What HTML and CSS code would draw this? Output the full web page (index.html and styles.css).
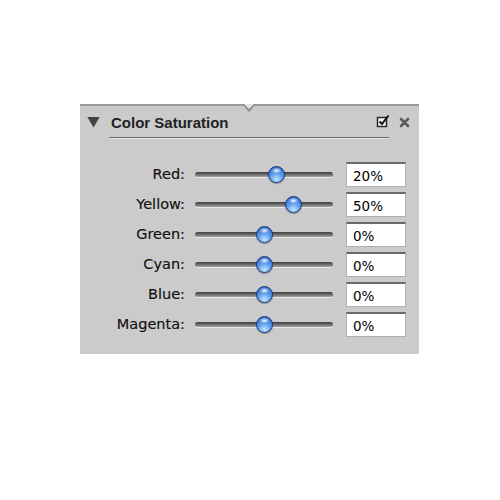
FILE: index.html
```html
<!DOCTYPE html>
<html lang="en">
<head>
  <meta charset="UTF-8">
  <title>Color Saturation</title>
  <link rel="stylesheet" href="styles.css">
</head>
<body>
  <div class="panel">
    <div class="panel-head">
      <span class="disclosure"></span>
      <span class="title">Color Saturation</span>
      <svg class="enable" width="14" height="14" viewBox="0 0 14 14">
        <rect x="1.5" y="3.5" width="9" height="9" fill="#f4f4f4" stroke="#222" stroke-width="1.4"/>
        <path d="M3.5 7.5 L6 10 L12.5 1.5" fill="none" stroke="#111" stroke-width="2"/>
      </svg>
      <svg class="close" width="11" height="11" viewBox="0 0 11 11">
        <path d="M2 2 L9 9 M9 2 L2 9" stroke="#5a5a5a" stroke-width="2.6" stroke-linecap="round"/>
      </svg>
    </div>
    <div class="rule"></div>

    <div class="rows">
      <label class="name">Red:</label>
      <div class="track"><span class="knob" style="--v:0.6"></span></div>
      <div class="field">20%</div>

      <label class="name">Yellow:</label>
      <div class="track"><span class="knob" style="--v:0.74"></span></div>
      <div class="field">50%</div>

      <label class="name">Green:</label>
      <div class="track"><span class="knob" style="--v:0.5"></span></div>
      <div class="field">0%</div>

      <label class="name">Cyan:</label>
      <div class="track"><span class="knob" style="--v:0.5"></span></div>
      <div class="field">0%</div>

      <label class="name">Blue:</label>
      <div class="track"><span class="knob" style="--v:0.5"></span></div>
      <div class="field">0%</div>

      <label class="name">Magenta:</label>
      <div class="track"><span class="knob" style="--v:0.5"></span></div>
      <div class="field">0%</div>
    </div>
  </div>
</body>
</html>
```

FILE: styles.css
```css
html,body{
  margin : 0;
  background : #fff;
}

.panel{
  position : relative;
  box-sizing : border-box;
  width : 339px;
  height : 250px;
  margin : 104px 0 0 80px;
  padding : 5px 0 15px;
  background : #cbcbcb;
  border-top : 2px solid #9a9a9a;
  font-family : "DejaVu Sans", sans-serif;
  color : #111;
}

/* little notch hanging from the top edge */
.panel::before,
.panel::after{
  content : "";
  position : absolute;
  clip-path : polygon(0 0, 100% 0, 50% 100%);
}
.panel::before{
  left : 162px;
  top : -2px;
  width : 14px;
  height : 8px;
  background : #8c8c8c;
}
.panel::after{
  left : 164px;
  top : -2px;
  width : 10px;
  height : 5px;
  background : #e2e2e2;
}

/* header */
.panel-head{
  display : flex;
  align-items : center;
  height : 22px;
  padding : 0 9px 0 7px;
}
.disclosure{
  width : 13px;
  height : 11px;
  background : #444;
  clip-path : polygon(0 0, 100% 0, 50% 100%);
}
.title{
  flex : 1;
  margin-left : 11px;
  font-family : "Liberation Sans", Arial, sans-serif;
  font-weight : bold;
  font-size : 15px;
  color : #222;
}
.enable{
  margin-top : -2px;
}
.close{
  margin-left : 9px;
}

.rule{
  height : 1px;
  margin : 4px 30px 20px 29px;
  background : #6e6e6e;
  border-bottom : 1px solid #e4e4e4;
}

/* slider rows: label | track | value */
.rows{
  display : grid;
  grid-template-columns : 105px 148px 73px;
  grid-auto-rows : 30px;
  align-items : center;
}
.name{
  text-align : right;
  font-size : 14.5px;
  -webkit-text-stroke : 0.15px #111;
}
.track{
  position : relative;
  height : 5px;
  margin : 1px 0 0 10px;
  border-radius : 3px;
  background : linear-gradient(to bottom, #3e3e3e 0, #666 45%, #a4a4a4 100%);
  box-shadow : 0 1px 0 #e8e8e8;
}
.knob{
  position : absolute;
  top : -6px;
  left : calc((100% - 16px) * var(--v));
  width : 17px;
  height : 17px;
  box-sizing : border-box;
  border-radius : 50%;
  border : 1px solid #17397d;
  background :
    radial-gradient(ellipse 5px 3px at 50% 24%, rgba(255,255,255,.95), rgba(255,255,255,0)),
    radial-gradient(circle at 50% 85%, #c4e6ff 0, #5d9ced 45%, #2459c0 100%);
  box-shadow : 0 1px 1px rgba(0,0,0,.35);
}
.field{
  box-sizing : border-box;
  height : 25px;
  margin-left : 13px;
  padding : 3px 0 0 6px;
  background : #fff;
  border : 1px solid #b0b0b0;
  border-top : 2px solid #6a6a6a;
  font-size : 13.5px;
  line-height : 18px;
  color : #000;
}
```
